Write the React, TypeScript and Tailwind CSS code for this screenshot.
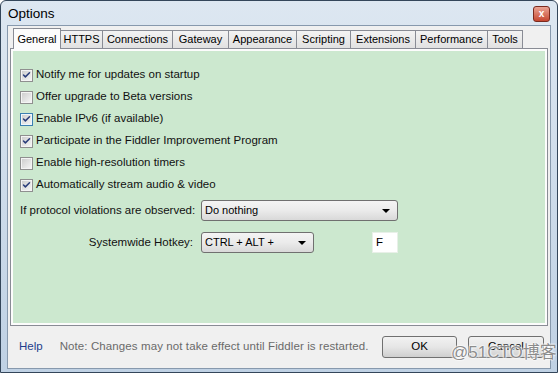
import { Check } from 'lucide-react'

const tabs = [
  { label: 'General', w: 'w-[48px]' },
  { label: 'HTTPS', w: 'w-[42px]' },
  { label: 'Connections', w: 'w-[70px]' },
  { label: 'Gateway', w: 'w-[56px]' },
  { label: 'Appearance', w: 'w-[68px]' },
  { label: 'Scripting', w: 'w-[54px]' },
  { label: 'Extensions', w: 'w-[65px]' },
  { label: 'Performance', w: 'w-[72px]' },
  { label: 'Tools', w: 'w-[35px]' },
]

const options = [
  { label: 'Notify me for updates on startup', checked: true },
  { label: 'Offer upgrade to Beta versions', checked: false },
  { label: 'Enable IPv6 (if available)', checked: true, hot: true },
  { label: 'Participate in the Fiddler Improvement Program', checked: true },
  { label: 'Enable high-resolution timers', checked: false },
  { label: 'Automatically stream audio & video', checked: true },
]

function Checkbox({ checked, hot }: { checked: boolean; hot?: boolean }) {
  return (
    <div
      className={`w-[13px] h-[13px] border flex items-center justify-center ${
        hot ? 'border-[#3c7fb1] bg-[#eef6fc]' : 'border-[#8f8f8f] bg-[#f4f4f4]'
      }`}
    >
      <div className="w-[9px] h-[9px] bg-gradient-to-br from-[#cfcfcf] to-[#f4f4f4] flex items-center justify-center">
        {checked && <Check size={10} strokeWidth={4} className="text-[#2a3d7a]" />}
      </div>
    </div>
  )
}

function Combo({ value, width }: { value: string; width: string }) {
  return (
    <div
      className={`${width} h-[21px] rounded-[3px] border border-[#707070] bg-gradient-to-b from-[#f4f4f4] via-[#ebebeb] to-[#d9d9d9] flex items-center pl-[3px] pr-[7px] text-[11px] text-black`}
    >
      <span className="flex-1">{value}</span>
      <div className="w-0 h-0 border-l-[4px] border-r-[4px] border-t-[4px] border-l-transparent border-r-transparent border-t-black" />
    </div>
  )
}

function Button({ label, width }: { label: string; width: string }) {
  return (
    <div
      className={`${width} h-[22px] rounded-[3px] border border-[#707070] bg-gradient-to-b from-[#f2f2f2] via-[#e6e6e6] to-[#cfcfcf] flex items-center justify-center text-[11.5px] text-black`}
    >
      {label}
    </div>
  )
}

export default function App() {
  return (
    <div
      className="w-[558px] h-[373px] border border-[#34465a] rounded-t-[6px] bg-gradient-to-b from-[#dde7f1] to-[#bfd1e4] relative overflow-hidden"
      style={{ fontFamily: '"Liberation Sans", Arial, sans-serif' }}
    >
      {/* Title bar */}
      <div className="h-[24px] flex items-start justify-between pl-[7px] pr-[7px] pt-[5px]">
        <span className="text-[13.5px] text-black leading-none mt-[1px]">Options</span>
        <div className="w-[17px] h-[16px] rounded-[3px] border border-[#7a2a1e] bg-gradient-to-b from-[#e9a393] to-[#c5452e] flex items-center justify-center text-white text-[10px] font-bold leading-none">
          x
        </div>
      </div>

      {/* Client area */}
      <div className="mx-[6px] h-[344px] border border-[#8799ad] bg-[#f0f0f0] flex flex-col">
        {/* Tabs */}
        <div className="flex items-end pl-[5px] pt-[2px] h-[22px]">
          {tabs.map((t, i) =>
            i === 0 ? (
              <div
                key={t.label}
                className={`${t.w} h-[21px] -mb-px relative z-10 border border-b-0 border-[#898c95] bg-[#fcfcfc] flex items-center justify-center text-[11px] text-black`}
              >
                {t.label}
              </div>
            ) : (
              <div
                key={t.label}
                className={`${t.w} h-[18px] border border-b-0 border-l-0 border-[#898c95] bg-gradient-to-b from-[#f3f3f3] to-[#e1e1e1] flex items-center justify-center text-[11px] text-black`}
              >
                {t.label}
              </div>
            )
          )}
        </div>

        {/* Panel */}
        <div className="mx-[2px] h-[278px] border border-[#898c95] bg-[#fcfcfc] p-[2px]">
          <div className="h-full bg-[#cce8cf] pl-[7px] pt-[13px] text-[11.5px] text-[#111]">
            {options.map((o) => (
              <div key={o.label} className="h-[22px] flex items-center gap-[3px]">
                <Checkbox checked={o.checked} hot={o.hot} />
                <span>{o.label}</span>
              </div>
            ))}

            <div className="mt-[4px] h-[21px] flex items-center">
              <span className="w-[181px]">If protocol violations are observed:</span>
              <Combo value="Do nothing" width="w-[197px]" />
            </div>

            <div className="mt-[11px] h-[21px] flex items-center">
              <span className="w-[181px] text-right pr-[8px]">Systemwide Hotkey:</span>
              <Combo value="CTRL + ALT +" width="w-[113px]" />
              <div className="ml-[58px] w-[26px] h-[21px] bg-white border border-[#e8f0e8] flex items-center pl-[3px] text-[11.5px] text-black">
                F
              </div>
            </div>
          </div>
        </div>

        {/* Footer */}
        <div className="flex-1 flex items-center pl-[11px] pr-[6px] text-[11.5px]">
          <span className="text-[#1f3d8c]">Help</span>
          <span className="ml-[17px] text-[#6a6a6a] tracking-[0.1px]">
            Note: Changes may not take effect until Fiddler is restarted.
          </span>
          <div className="ml-auto flex gap-[11px]">
            <Button label="OK" width="w-[75px]" />
            <Button label="Cancel" width="w-[76px]" />
          </div>
        </div>
      </div>

      {/* Watermark */}
      <div
        className="absolute left-[450px] top-[343px] text-[17px] text-[#8c8c8c] leading-none [text-shadow:0_0_2px_#fff,0_0_2px_#fff,0_0_2px_#fff]"
        style={{ fontFamily: '"Liberation Sans", "Noto Sans CJK SC", sans-serif' }}
      >
        @51CTO博客
      </div>
    </div>
  )
}
